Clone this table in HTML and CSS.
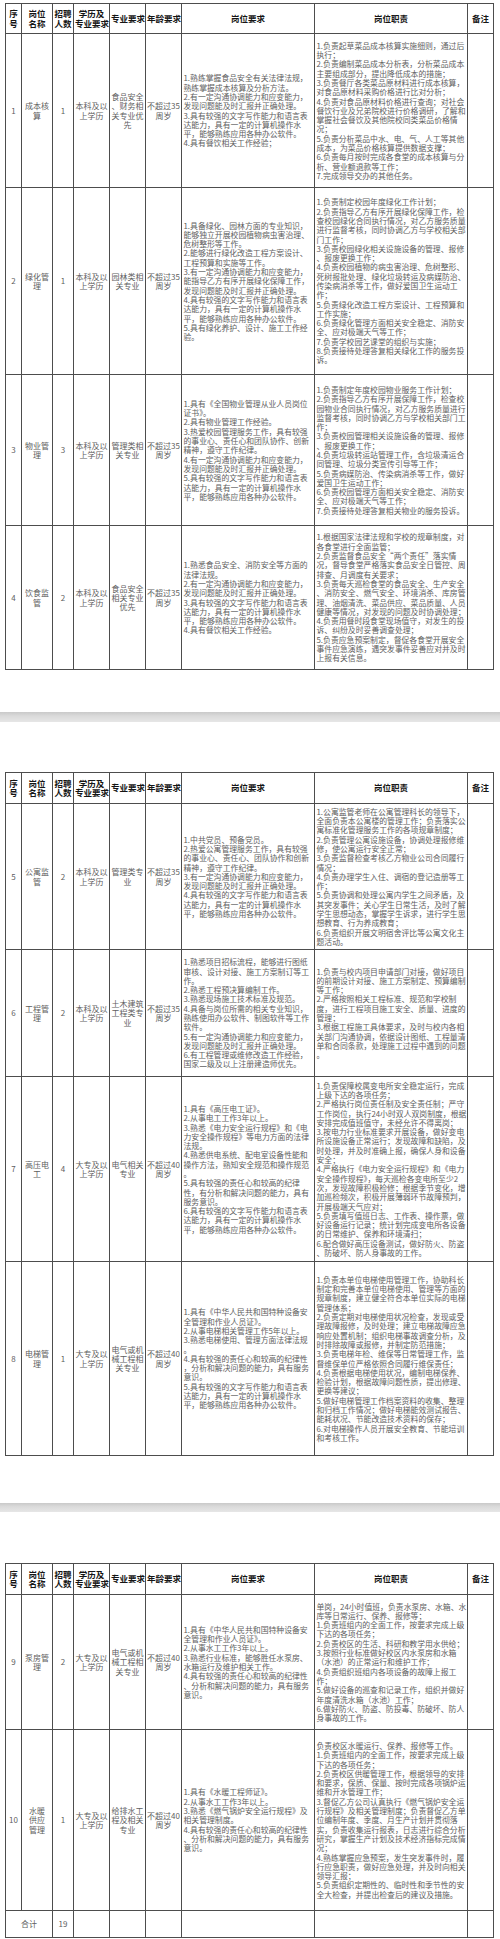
FILE: index.html
```html
<!DOCTYPE html>
<html lang="zh-CN">
<head>
<meta charset="utf-8">
<title>岗位表</title>
<link rel="stylesheet" href="styles.css">
</head>
<body>

<section class="page p1">
<table class="grid">
<colgroup><col class="c1"><col class="c2"><col class="c3"><col class="c4"><col class="c5"><col class="c6"><col class="c7"><col class="c8"><col class="c9"></colgroup>
<tr class="hd h1"><th>序<br>号</th><th>岗位<br>名称</th><th>招聘<br>人数</th><th>学历及<br>专业要求</th><th>专业要求</th><th>年龄要求</th><th>岗位要求</th><th>岗位职责</th><th>备注</th></tr>
<tr class="r1">
<td>1</td><td>成本核<br>算</td><td>1</td><td>本科及以<br>上学历</td><td>食品安全<br>、财务相<br>关专业优<br>先</td><td>不超过35<br>周岁</td>
<td class="txt">1.熟练掌握食品安全有关法律法规，<br>熟练掌握成本核算及分析方法。<br>2.有一定沟通协调能力和应变能力，<br>发现问题能及时汇报并正确处理。<br>3.具有较强的文字写作能力和语言表<br>达能力，具有一定的计算机操作水<br>平，能够熟练应用各种办公软件。<br>4.具有餐饮相关工作经验；</td>
<td class="txt">1.负责起草菜品成本核算实施细则，通过后<br>执行；<br>2.负责编制菜品成本分析表，分析菜品成本<br>主要组成部分，提出降低成本的措施；<br>3.负责餐厅各类菜品原材料进行成本核算，<br>对食品原材料采购价格进行比对分析；<br>4.负责对食品原材料价格进行查询；对社会<br>餐饮行业及兄弟院校进行价格调研，了解和<br>掌握社会餐饮及其他院校同类菜品价格情<br>况；<br>5.负责分析菜品中水、电、气、人工等其他<br>成本，为菜品价格核算提供数据支撑；<br>6.负责每月按时完成各食堂的成本核算与分<br>析、营业额退款等工作；<br>7.完成领导交办的其他任务。</td>
<td></td>
</tr>
<tr class="r2">
<td>2</td><td>绿化管<br>理</td><td>1</td><td>本科及以<br>上学历</td><td>园林类相<br>关专业</td><td>不超过35<br>周岁</td>
<td class="txt">1.具备绿化、园林方面的专业知识，<br>能够独立开展校园植物病虫害治理、<br>危树整形等工作。<br>2.能够进行绿化改造工程方案设计、<br>工程预算和实施等工作。<br>3.有一定沟通协调能力和应变能力，<br>能指导乙方有序开展绿化保障工作，<br>发现问题能及时汇报并正确处理。<br>4.具有较强的文字写作能力和语言表<br>达能力，具有一定的计算机操作水<br>平，能够熟练应用各种办公软件。<br>5.具有绿化养护、设计、施工工作经<br>验。</td>
<td class="txt">1.负责制定校园年度绿化工作计划；<br>2.负责指导乙方有序开展绿化保障工作，检<br>查校园绿化合同执行情况，对乙方服务质量<br>进行监督考核，同时协调乙方与学校相关部<br>门工作；<br>3.负责校园绿化相关设施设备的管理、报修<br>、报废更换工作；<br>4.负责校园植物的病虫害治理、危树整形、<br>死树报批处理、绿化垃圾转运及病媒防治、<br>传染病消杀等工作，做好爱国卫生运动工<br>作；<br>5.负责绿化改造工程方案设计、工程预算和<br>工作实施；<br>6.负责绿化管理方面相关安全稳定、消防安<br>全、应对极端天气等工作；<br>7.负责学校园艺课堂的组织与实施；<br>8.负责接待处理答复相关绿化工作的服务投<br>诉。</td>
<td></td>
</tr>
<tr class="r3">
<td>3</td><td>物业管<br>理</td><td>3</td><td>本科及以<br>上学历</td><td>管理类相<br>关专业</td><td>不超过35<br>周岁</td>
<td class="txt">1.具有《全国物业管理从业人员岗位<br>证书》。<br>2.具有物业管理工作经验。<br>3.热爱校园管理服务工作，具有较强<br>的事业心、责任心和团队协作、创新<br>精神，遵守工作纪律。<br>4.有一定沟通协调能力和应变能力，<br>发现问题能及时汇报并正确处理。<br>5.具有较强的文字写作能力和语言表<br>达能力，具有一定的计算机操作水<br>平，能够熟练应用各种办公软件。</td>
<td class="txt">1.负责制定年度校园物业服务工作计划；<br>2.负责指导乙方有序开展保障工作，检查校<br>园物业合同执行情况，对乙方服务质量进行<br>监督考核，同时协调乙方与学校相关部门工<br>作；<br>3.负责校园管理相关设施设备的管理、报修<br>、报废更换工作；<br>4.负责垃圾转运站管理工作，含垃圾清运合<br>同管理、垃圾分类宣传引导等工作；<br>5.负责病媒防治、传染病消杀等工作，做好<br>爱国卫生运动工作；<br>6.负责校园管理方面相关安全稳定、消防安<br>全、应对极端天气等工作；<br>7.负责接待处理答复相关物业的服务投诉。</td>
<td></td>
</tr>
<tr class="r4">
<td>4</td><td>饮食监<br>管</td><td>2</td><td>本科及以<br>上学历</td><td>食品安全<br>相关专业<br>优先</td><td>不超过35<br>周岁</td>
<td class="txt">1.熟悉食品安全、消防安全等方面的<br>法律法规。<br>2.有一定沟通协调能力和应变能力，<br>发现问题能及时汇报并正确处理。<br>3.具有较强的文字写作能力和语言表<br>达能力，具有一定的计算机操作水<br>平，能够熟练应用各种办公软件。<br>4.具有餐饮相关工作经验。</td>
<td class="txt">1.根据国家法律法规和学校的规章制度，对<br>各食堂进行全面监管；<br>2.负责监督食品安全“两个责任”落实情<br>况，督导食堂严格落实食品安全日管控、周<br>排查、月调度有关要求；<br>3.负责每天巡检食堂的食品安全、生产安全<br>、消防安全、燃气安全、环境消杀、库房管<br>理、油烟清洗、菜品供应、菜品质量、人员<br>健康等情况，对发现的问题及时协调处理；<br>4.负责用餐时段食堂现场值守，对发生的投<br>诉、纠纷及时妥善调查处理；<br>5.负责应急预案制定，督促各食堂开展安全<br>事件应急演练，遇突发事件妥善应对并及时<br>上报有关信息。</td>
<td></td>
</tr>
</table>
</section>

<div class="band b1"></div>

<section class="page p2">
<table class="grid">
<colgroup><col class="c1"><col class="c2"><col class="c3"><col class="c4"><col class="c5"><col class="c6"><col class="c7"><col class="c8"><col class="c9"></colgroup>
<tr class="hd h2"><th>序<br>号</th><th>岗位<br>名称</th><th>招聘<br>人数</th><th>学历及<br>专业要求</th><th>专业要求</th><th>年龄要求</th><th>岗位要求</th><th>岗位职责</th><th>备注</th></tr>
<tr class="r5">
<td>5</td><td>公寓监<br>管</td><td>2</td><td>本科及以<br>上学历</td><td>管理类专<br>业</td><td>不超过35<br>周岁</td>
<td class="txt">1.中共党员、预备党员。<br>2.热爱公寓管理服务工作，具有较强<br>的事业心、责任心、团队协作和创新<br>精神，遵守工作纪律。<br>3.有一定沟通协调能力和应变能力，<br>发现问题能及时汇报并正确处理。<br>4.具有较强的文字写作能力和语言表<br>达能力，具有一定的计算机操作水<br>平，能够熟练应用各种办公软件。</td>
<td class="txt">1.公寓监管老师在公寓管理科长的领导下，<br>全面负责本公寓楼的管理工作；负责落实公<br>寓标准化管理服务工作的各项规章制度；<br>2.负责管理公寓设施设备，协调处理报修维<br>修，使公寓运行安全正常；<br>3.负责监督检查考核乙方物业公司合同履行<br>情况；<br>4.负责办理学生入住、调宿的登记造册等工<br>作；<br>5.负责协调和处理公寓内学生之间矛盾，及<br>其突发事件；关心学生日常生活，及时了解<br>学生思想动态，掌握学生诉求，进行学生思<br>想教育、行为养成教育；<br>6.负责组织开展文明宿舍评比等公寓文化主<br>题活动。</td>
<td></td>
</tr>
<tr class="r6">
<td>6</td><td>工程管<br>理</td><td>2</td><td>本科及以<br>上学历</td><td>土木建筑<br>工程类专<br>业</td><td>不超过35<br>周岁</td>
<td class="txt">1.熟悉项目招标流程，能够进行图纸<br>审核、设计对接、施工方案制订等工<br>作。<br>2.熟悉工程预决算编制工作。<br>3.熟悉现场施工技术标准及规范。<br>4.具备与岗位所需的相关专业知识，<br>熟练使用办公软件、制图软件等工作<br>软件。<br>5.有一定沟通协调能力和应变能力，<br>发现问题能及时汇报并正确处理。<br>6.有工程管理或维修改造工作经验，<br>国家二级及以上注册建造师优先。</td>
<td class="txt">1.负责与校内项目申请部门对接，做好项目<br>的前期设计对接、施工方案制定、预算编制<br>等工作；<br>2.严格按照相关工程标准、规范和学校制<br>度，进行工程项目施工安全、质量、进度的<br>管理；<br>3.根据工程施工具体要求，及时与校内各相<br>关部门沟通协调，依据设计图纸、工程量清<br>单和合同条款，处理施工过程中遇到的问题<br>。</td>
<td></td>
</tr>
<tr class="r7">
<td>7</td><td>高压电<br>工</td><td>4</td><td>大专及以<br>上学历</td><td>电气相关<br>专业</td><td>不超过40<br>周岁</td>
<td class="txt">1.具有《高压电工证》。<br>2.从事电工工作3年以上。<br>3.熟悉《电力安全运行规程》和《电<br>力安全操作规程》等电力方面的法律<br>法规。<br>4.熟悉供电系统、配电室设备性能和<br>操作方法，熟知安全规范和操作规范<br>。<br>5.具有较强的责任心和较高的纪律<br>性，有分析和解决问题的能力，具有<br>服务意识。<br>6.具有较强的文字写作能力和语言表<br>达能力，具有一定的计算机操作水<br>平，能够熟练应用各种办公软件。</td>
<td class="txt">1.负责保障校属变电所安全稳定运行，完成<br>上级下达的各项任务；<br>2.严格执行岗位责任制及安全责任制；严守<br>工作岗位，执行24小时双人双岗制度，根据<br>安排完成值班值守，未经允许不得离岗；<br>3.按电力行业标准要求开展设备，做好变电<br>所设施设备正常运行；发现故障和缺陷，及<br>时处理，并及时准确上报，确保人身和设备<br>安全；<br>4.严格执行《电力安全运行规程》和《电力<br>安全操作规程》，每天巡检各变电所至少2<br>次，发现故障积极检修；根据季节变化，增<br>加巡检频次，积极开展薄弱环节故障预判，<br>开展极端天气应对；<br>5.负责填写值班日志、工作表、操作票，做<br>好设备运行记录；统计划完成变电所各设备<br>的日常维护、保养和环境清扫；<br>6.配合做好高压设备测试，做好防火、防盗<br>、防破坏、防人身事故的工作。</td>
<td></td>
</tr>
<tr class="r8">
<td>8</td><td>电梯管<br>理</td><td>1</td><td>大专及以<br>上学历</td><td>电气或机<br>械工程相<br>关专业</td><td>不超过40<br>周岁</td>
<td class="txt">1.具有《中华人民共和国特种设备安<br>全管理和作业人员证》。<br>2.从事电梯相关管理工作5年以上。<br>3.熟悉电梯使用、管理方面法律法规<br>。<br>4.具有较强的责任心和较高的纪律性<br>，分析和解决问题的能力，具有服务<br>意识。<br>5.具有较强的文字写作能力和语言表<br>达能力，具有一定的计算机操作水<br>平，能够熟练应用各种办公软件。</td>
<td class="txt">1.负责本单位电梯使用管理工作，协助科长<br>制定和完善本单位电梯使用、管理等方面的<br>规章制度，建立健全符合本单位实际的电梯<br>管理体系；<br>2.负责定期对电梯使用状况检查，发现或受<br>理故障报修，及时处理；建立电梯故障应急<br>响应处置机制；组织电梯事故调查分析，及<br>时排除故障或报修，并制定防范措施；<br>3.负责电梯年检、维保等日常管理工作，监<br>督维保单位严格依照合同履行维保责任；<br>4.负责根据电梯使用状况，编制电梯保养、<br>检验计划，根据故障问题性质，提出修理、<br>更换等建议；<br>5.做好电梯管理工作档案资料的收集、整理<br>和归档工作情况；做好电梯能效测试报告、<br>能耗状况、节能改造技术资料的保存；<br>6.对电梯操作人员开展安全教育、节能培训<br>和考核工作。</td>
<td></td>
</tr>
</table>
</section>

<div class="band b2"></div>

<section class="page p3">
<table class="grid">
<colgroup><col class="c1"><col class="c2"><col class="c3"><col class="c4"><col class="c5"><col class="c6"><col class="c7"><col class="c8"><col class="c9"></colgroup>
<tr class="hd h2"><th>序<br>号</th><th>岗位<br>名称</th><th>招聘<br>人数</th><th>学历及<br>专业要求</th><th>专业要求</th><th>年龄要求</th><th>岗位要求</th><th>岗位职责</th><th>备注</th></tr>
<tr class="r9">
<td>9</td><td>泵房管<br>理</td><td>2</td><td>大专及以<br>上学历</td><td>电气或机<br>械工程相<br>关专业</td><td>不超过40<br>周岁</td>
<td class="txt">1.具有《中华人民共和国特种设备安<br>全管理和作业人员证》。<br>2.从事水工工作3年以上。<br>3.熟悉行业标准，能够胜任水泵房、<br>水箱运行及维护相关工作。<br>4.具有较强的责任心和较高的纪律性<br>、分析和解决问题的能力，具有服务<br>意识。</td>
<td class="txt">单岗，24小时值班，负责水泵房、水箱、水<br>库等日常运行、保养、报修等；<br>1.负责班组内的全面工作，按要求完成上级<br>下达的各项任务；<br>2.负责校区的生活、科研和教学用水供给；<br>3.按照行业标准做好校区内水泵房和水箱<br>（水池）的正常运行和维护工作；<br>4.负责组织班组内各项设备的故障上报工<br>作；<br>5.做好设备的巡查和记录工作，组织并做好<br>年度清洗水箱（水池）工作；<br>6.做好防火、防盗、防投毒、防破坏、防人<br>身事故的工作。</td>
<td></td>
</tr>
<tr class="r10">
<td>10</td><td>水暖<br>供应<br>管理</td><td>1</td><td>大专及以<br>上学历</td><td>给排水工<br>程及相关<br>专业</td><td>不超过40<br>周岁</td>
<td class="txt">1.具有《水暖工程师证》。<br>2.从事水工工作3年以上。<br>3.熟悉《燃气锅炉安全运行规程》及<br>相关管理制度。<br>4.具有较强的责任心和较高的纪律性<br>、分析和解决问题的能力，具有服务<br>意识。</td>
<td class="txt">负责校区水暖运行、保养、报修等工作。<br>1.负责班组内的全面工作，按要求完成上级<br>下达的各项任务；<br>2.负责校区供暖管理工作，根据领导的安排<br>和要求，保质、保量、按时完成各项锅炉运<br>维和开水管理工作；<br>3.督促乙方公司认真执行《燃气锅炉安全运<br>行规程》及相关管理制度；负责督促乙方单<br>位编制年度、季度、月生产计划并贯彻落<br>实，负责收集运行报表，日志进行综合分析<br>研究，掌握生产计划及技术经济指标完成情<br>况；<br>4.熟练掌握应急预案，发生突发事件时，履<br>行应急职责，做好应急处理，并及时向相关<br>领导汇报；<br>5.负责组织定期性的、临时性和季节性的安<br>全大检查，并提出检查后的建议及措施。</td>
<td></td>
</tr>
<tr class="rt">
<td colspan="2">合计</td><td>19</td><td></td><td></td><td></td><td></td><td></td><td></td>
</tr>
</table>
</section>

</body>
</html>
```

FILE: styles.css
```css
html, body {
  margin: 0;
  padding: 0;
  background: #ffffff;
}

body {
  font-family: "Noto Sans CJK SC", "Noto Sans", sans-serif;
}

.page {
  padding-left: 5px;
  padding-right: 7px;
}

.p1 { padding-top: 3px; padding-bottom: 42px; }
.p2 { padding-top: 50px; padding-bottom: 47px; }
.p3 { padding-top: 51px; padding-bottom: 4px; }

.band {
  background: linear-gradient(#c9c9c9, #dadada 40%, #e6e6e6);
}
.b1 { height: 10px; }
.b2 { height: 9px; }

.grid {
  width: 488px;
  border-collapse: collapse;
  table-layout: fixed;
}

.c1 { width: 16px; }
.c2 { width: 31px; }
.c3 { width: 21px; }
.c4 { width: 36px; }
.c5 { width: 36px; }
.c6 { width: 36px; }
.c7 { width: 133px; }
.c8 { width: 153px; }
.c9 { width: 26px; }

.grid th,
.grid td {
  border: 1px solid #4d4d4d;
  padding: 0 1px;
  vertical-align: middle;
  text-align: center;
  white-space: nowrap;
  overflow: hidden;
}

.grid th {
  font-size: 8.5px;
  line-height: 9.5px;
  font-weight: 700;
  color: #151515;
}

.grid td {
  font-size: 8px;
  line-height: 9.3px;
  color: #606060;
}

.grid td.txt {
  font-size: 7.85px;
  text-align: left;
  padding-left: 1.5px;
  padding-right: 0;
}

.h1 { height: 30px; }
.h2 { height: 31px; }
.r1 { height: 154px; }
.r2 { height: 187px; }
.r3 { height: 151px; }
.r4 { height: 144px; }
.r5 { height: 146px; }
.r6 { height: 127px; }
.r7 { height: 185px; }
.r8 { height: 194px; }
.r9 { height: 135px; }
.r10 { height: 181px; }
.rt { height: 27px; }
```
